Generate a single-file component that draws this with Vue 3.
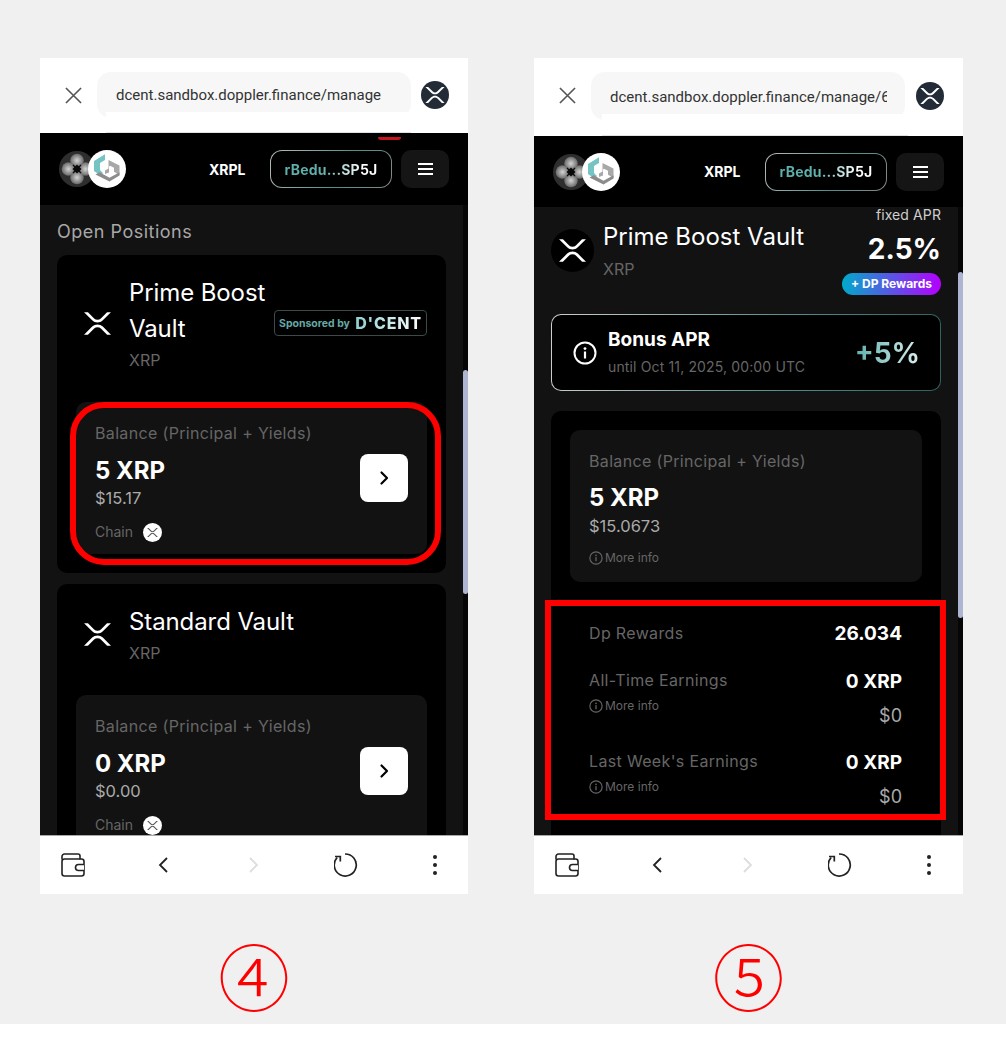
<script setup>
const phones = [
  { id: 4, glyph: '④', url: 'dcent.sandbox.doppler.finance/manage', thumbTop: 165, thumbHeight: 224 },
  { id: 5, glyph: '⑤', url: 'dcent.sandbox.doppler.finance/manage/6', thumbTop: 65, thumbHeight: 346 },
]
const vaults = [
  { name: 'Prime Boost Vault', badge: true, amount: '5 XRP', usd: '$15.17' },
  { name: 'Standard Vault', badge: false, amount: '0 XRP', usd: '$0.00' },
]
const earnings = [
  { label: 'All-Time Earnings', amount: '0 XRP', usd: '$0' },
  { label: "Last Week's Earnings", amount: '0 XRP', usd: '$0' },
]
</script>

<template>
  <div class="page">
    <svg class="defs" aria-hidden="true">
      <symbol id="xrp" viewBox="0 0 512 424">
        <path fill="currentColor" d="M437 0h74L357 152.48c-55.77 55.19-146.19 55.19-202 0L.94 0H75l117 115.83a91.1 91.1 0 0 0 127.91 0Z" />
        <path fill="currentColor" d="M74.05 424H0l155-153.42c55.77-55.19 146.19-55.19 202 0L512 424h-74L320 307.23a91.1 91.1 0 0 0-127.91 0Z" />
      </symbol>
      <symbol id="info" viewBox="0 0 24 24">
        <circle cx="12" cy="12" r="10.5" fill="none" stroke="currentColor" stroke-width="2" />
        <rect x="10.9" y="10.5" width="2.2" height="7" fill="currentColor" />
        <circle cx="12" cy="7.6" r="1.4" fill="currentColor" />
      </symbol>
      <symbol id="chev" viewBox="0 0 16 16">
        <path d="M5.5 2.5 11 8l-5.5 5.5" fill="none" stroke="currentColor" stroke-width="2.2" stroke-linecap="round" stroke-linejoin="round" />
      </symbol>
    </svg>

    <div class="stage">
      <div v-for="phone in phones" :key="phone.id" class="column" :class="`column-${phone.id}`">
        <div class="phone">
          <div class="topbar">
            <svg class="close" viewBox="0 0 18 18"><path d="M1 1l16 16M17 1 1 17" stroke="#555" stroke-width="1.7" fill="none" /></svg>
            <div class="url"><span class="url-text">{{ phone.url }}</span></div>
            <span class="wallet-dot"><svg class="wallet-dot-mark"><use href="#xrp" /></svg></span>
          </div>

          <header class="header">
            <div class="logos">
              <svg class="logo-doppler" viewBox="0 0 36 36">
                <defs>
                  <radialGradient :id="`petal-${phone.id}`" cx="50%" cy="50%" r="55%">
                    <stop offset="0" stop-color="#d4d4d4" />
                    <stop offset="1" stop-color="#5e5e5e" />
                  </radialGradient>
                </defs>
                <circle cx="18" cy="18" r="18" fill="#2e2e2e" />
                <circle cx="18" cy="9.500" r="6.800" :fill="`url(#petal-${phone.id})`" />
                <circle cx="18" cy="26.500" r="6.800" :fill="`url(#petal-${phone.id})`" />
                <circle cx="9.500" cy="18" r="6.800" :fill="`url(#petal-${phone.id})`" />
                <circle cx="26.500" cy="18" r="6.800" :fill="`url(#petal-${phone.id})`" />
                <path d="M18 13.500 22.500 18 18 22.500 13.500 18Z" fill="#0a0a0a" />
                <path d="M14 14l8 8M22 14l-8 8" stroke="#0a0a0a" stroke-width="1.200" />
              </svg>
              <svg class="logo-gem" viewBox="0 0 38 38">
                <circle cx="19" cy="19" r="19" fill="#fff" />
                <path d="M6 11 17 4.300V10l-5 3v7l3 3-2 3-7-5z" fill="#74c3c5" />
                <path d="M17 20.500l3.500-2V10l11 5.500V25l-5.500-3.200v-4l-4-2-1 .6v6L17 24z" fill="#a8a8a8" />
                <path d="M7.500 24.500l4-2.200 10 5.500 10-5.500v3.200L21.500 31.500z" fill="#8c8c8c" />
              </svg>
            </div>
            <span class="network">XRPL</span>
            <button class="wallet-btn"><span class="wallet-grad">rBedu...SP5J</span></button>
            <button class="menu-btn" aria-label="Menu"><span /><span /><span /></button>
          </header>

          <div class="body">
            <main class="scroll">
              <template v-if="phone.id === 4">
                <h2 class="section">Open Positions</h2>
                <section v-for="v in vaults" :key="v.name" class="card vault">
                  <div class="vault-head">
                    <svg class="vault-mark"><use href="#xrp" /></svg>
                    <div class="vault-names">
                      <div class="title" :class="{ narrow: v.badge }">{{ v.name }}</div>
                      <div class="sub">XRP</div>
                    </div>
                    <div v-if="v.badge" class="badge">
                      <span class="badge-by">Sponsored by</span>
                      <span class="badge-logo">D'CENT</span>
                    </div>
                  </div>
                  <div class="panel panel-row">
                    <div>
                      <div class="muted">Balance (Principal + Yields)</div>
                      <div class="amount">{{ v.amount }}</div>
                      <div class="usd">{{ v.usd }}</div>
                      <div class="chain">
                        <span>Chain</span>
                        <span class="chain-dot"><svg class="chain-mark"><use href="#xrp" /></svg></span>
                      </div>
                    </div>
                    <button class="go" aria-label="Open"><svg class="go-icon"><use href="#chev" /></svg></button>
                  </div>
                </section>
              </template>

              <template v-else>
                <div class="detail-head">
                  <span class="detail-dot"><svg class="detail-mark"><use href="#xrp" /></svg></span>
                  <div class="detail-names">
                    <div class="title">Prime Boost Vault</div>
                    <div class="sub">XRP</div>
                  </div>
                  <div class="apr">
                    <div class="apr-label">fixed APR</div>
                    <div class="apr-value">2.5%</div>
                    <div class="apr-pill">+ DP Rewards</div>
                  </div>
                </div>

                <div class="bonus">
                  <svg class="bonus-icon"><use href="#info" /></svg>
                  <div>
                    <div class="bonus-title">Bonus APR</div>
                    <div class="bonus-sub">until Oct 11, 2025, 00:00 UTC</div>
                  </div>
                  <div class="bonus-value">+5%</div>
                </div>

                <section class="card detail-card">
                  <div class="panel detail-panel">
                    <div class="muted">Balance (Principal + Yields)</div>
                    <div class="amount">5 XRP</div>
                    <div class="usd">$15.0673</div>
                    <div class="more"><svg class="more-icon"><use href="#info" /></svg>More info</div>
                  </div>
                  <div class="rows">
                    <div class="row-dp">
                      <span class="muted">Dp Rewards</span>
                      <span class="value">26.034</span>
                    </div>
                    <div v-for="e in earnings" :key="e.label" class="row">
                      <div>
                        <div class="muted">{{ e.label }}</div>
                        <div class="more tight"><svg class="more-icon"><use href="#info" /></svg>More info</div>
                      </div>
                      <div class="row-right">
                        <div class="value">{{ e.amount }}</div>
                        <div class="row-usd">{{ e.usd }}</div>
                      </div>
                    </div>
                  </div>
                </section>
              </template>
            </main>
            <div class="track">
              <div class="thumb" :style="{ marginTop: phone.thumbTop + 'px', height: phone.thumbHeight + 'px' }" />
            </div>
          </div>

          <nav class="bottom">
            <svg class="nav-wallet" viewBox="0 0 24 24">
              <path d="M1 6.500V3.500A2.500 2.500 0 0 1 3.500 1H17a2 2 0 0 1 2 2v3.500" fill="none" stroke="#222" stroke-width="1.6" />
              <rect x="1" y="6" width="22" height="17" rx="2.500" fill="none" stroke="#222" stroke-width="1.600" />
              <path d="M23 11.500h-5.500a3 3 0 0 0 0 6H23" fill="#fff" stroke="#222" stroke-width="1.600" />
            </svg>
            <svg class="nav-chev" viewBox="0 0 10 16"><path d="M9 1 2 8l7 7" fill="none" stroke="#222" stroke-width="1.800" /></svg>
            <svg class="nav-chev" viewBox="0 0 10 16"><path d="M1 1l7 7-7 7" fill="none" stroke="#ddd" stroke-width="1.800" /></svg>
            <svg class="nav-reload" viewBox="0 0 24 24">
              <path d="M11 1A11 11 0 1 1 3.200 4.500" fill="none" stroke="#222" stroke-width="1.700" />
              <path d="M1 3.500H6.300V8.500" fill="none" stroke="#222" stroke-width="1.700" />
            </svg>
            <div class="nav-dots"><i /><i /><i /></div>
          </nav>

          <div class="patch" />
          <template v-if="phone.id === 4">
            <div class="sliver" />
            <div class="ring" />
          </template>
          <div v-else class="frame" />
        </div>
        <div class="step">{{ phone.glyph }}</div>
      </div>
    </div>
  </div>
</template>

<style>
html, body { margin: 0; background: #fff; }
</style>

<style scoped>
.page {
  height: 1061px;
  background: #fff;
  font-family: Inter, "Noto Sans", sans-serif;
  overflow: hidden;
}
.defs { display: none; }
.stage {
  height: 1024px;
  box-sizing: border-box;
  padding: 58px 0 0 40px;
  background: #f0f0f0;
  display: flex;
  gap: 66px;
}
.column { display: flex; flex-direction: column; align-items: stretch; }
.column-4 { width: 428px; }
.column-5 { width: 429px; }
.phone {
  position: relative;
  height: 836px;
  display: flex;
  flex-direction: column;
  overflow: hidden;
  background: #000;
}
.step {
  margin-top: 40px;
  text-align: center;
  color: #f00;
  font: 300 72px/80px "Noto Sans CJK KR", sans-serif;
}

/* browser top bar */
.topbar {
  height: 75px;
  flex: none;
  background: #fff;
  display: flex;
  align-items: flex-start;
  padding: 14px 19px 0 25px;
  box-sizing: border-box;
}
.column-5 .topbar { height: 78px; }
.close { width: 17px; height: 17px; margin: 15px 15px 0 0; flex: none; }
.url {
  flex: none;
  width: 314px;
  height: 46px;
  box-sizing: border-box;
  padding: 0 18px 0 19px;
  background: #f7f7f7;
  border-radius: 14px;
  color: #333;
  font-family: Roboto, sans-serif;
  font-size: 15px;
  line-height: 47px;
  overflow: hidden;
}
.column-5 .url { height: 48px; line-height: 50px; }
.url-text { display: block; white-space: nowrap; overflow: hidden; }
.wallet-dot {
  flex: none;
  width: 28px;
  height: 28px;
  margin: 9px 0 0 10px;
  border-radius: 50%;
  background: #222b36;
  color: #fff;
  display: flex;
  align-items: center;
  justify-content: center;
}
.column-5 .wallet-dot { margin: 10px 0 0 11px; }
.wallet-dot-mark { width: 20px; height: 16px; }
.patch {
  position: absolute;
  left: 66px;
  top: 54px;
  width: 305px;
  height: 20px;
  background: #fff;
  border-bottom: 1px solid #e2e2e2;
}
.column-5 .patch { left: 68px; top: 56px; width: 306px; height: 21px; }
.sliver {
  position: absolute;
  left: 338px;
  top: 79px;
  width: 23px;
  height: 3px;
  background: #c8141c;
  border-radius: 0 0 10px 10px;
}

/* app header */
.header {
  height: 72px;
  flex: none;
  background: #000;
  box-sizing: border-box;
  padding: 0 19px;
  display: flex;
  align-items: center;
}
.column-5 .header { height: 71px; }
.logos { display: flex; align-items: center; width: 150px; flex: none; }
.column-5 .logos { width: 151px; }
.logo-doppler { width: 36px; height: 36px; flex: none; }
.logo-gem { width: 38px; height: 38px; flex: none; margin-left: -7px; }
.network { color: #fff; font-size: 14px; font-weight: 700; width: 61px; flex: none; }
.wallet-btn {
  width: 122px;
  height: 38px;
  flex: none;
  padding: 0;
  border: 1px solid transparent;
  border-radius: 12px;
  background: linear-gradient(#000, #000) padding-box, linear-gradient(120deg, #bbb, #4f8f8c 60%, #888) border-box;
  font: 700 14px Inter, sans-serif;
  letter-spacing: 0.200px;
}
.wallet-grad {
  background: linear-gradient(90deg, #5fb0ac 40%, #fff 85%);
  -webkit-background-clip: text;
  background-clip: text;
  color: transparent;
}
.menu-btn {
  width: 48px;
  height: 38px;
  flex: none;
  margin-left: 9px;
  padding: 0;
  border: 0;
  border-radius: 10px;
  background: #151515;
  display: flex;
  flex-direction: column;
  align-items: center;
  justify-content: center;
  gap: 3px;
}
.menu-btn span { display: block; width: 15px; height: 2px; background: #fff; }

/* scrolling body */
.body { flex: 1; min-height: 0; display: flex; }
.scroll {
  flex: 1;
  min-width: 0;
  background: #121212;
  box-sizing: border-box;
  padding: 0 17px;
  overflow: hidden;
}
.track { width: 5px; flex: none; background: #060606; }
.thumb { background: #aeb5d0; border-radius: 3px; }
.section {
  margin: 14px 0 12px;
  padding-top: 1px;
  height: 23px;
  color: #a8a8a8;
  font-size: 18px;
  line-height: 24px;
  font-weight: 400;
  letter-spacing: 0.500px;
}
.card { background: #000; border-radius: 10px; }
.vault { padding: 19px; margin-bottom: 11px; }
.vault-head { display: flex; align-items: center; margin-bottom: 30px; }
.vault-mark { width: 27px; height: 25px; margin: 0 18px 0 8px; flex: none; color: #fff; }
.vault-names { flex: none; }
.title { color: #fff; font-size: 24px; line-height: 36px; }
.vault-names .title { padding-top: 1px; letter-spacing: -0.100px; }
.vault-names .title.narrow { padding-top: 0; margin-top: 1px; }
.title.narrow { width: 145px; }
.sub { color: #666; font-size: 16px; line-height: 24px; margin-top: 2px; }
.vault-names .sub { margin-top: 1px; }
.badge {
  margin-left: auto;
  width: 153px;
  height: 26px;
  box-sizing: border-box;
  border: 1px solid #3c4a4a;
  border-radius: 4px;
  padding: 0 4px;
  display: flex;
  align-items: center;
  justify-content: space-between;
  white-space: nowrap;
}
.badge-by { color: #65aaa6; font-size: 10.500px; font-weight: 700; }
.badge-logo {
  font-size: 16px;
  font-weight: 800;
  letter-spacing: 0.800px;
  background: linear-gradient(90deg, #8fd0d0, #fff);
  -webkit-background-clip: text;
  background-clip: text;
  color: transparent;
}
.panel { background: #121212; border-radius: 10px; box-sizing: border-box; padding: 19px; }
.panel-row { height: 152px; display: flex; align-items: center; justify-content: space-between; padding-top: 19px; padding-bottom: 12px; }
.muted { color: #666; font-size: 16px; line-height: 24px; letter-spacing: 0.340px; }
.amount { color: #fff; font-size: 24px; line-height: 32px; font-weight: 700; margin: 10px 0 -1px; }
.usd { color: #aaa; font-size: 16.500px; line-height: 24px; }
.chain { display: flex; align-items: center; gap: 10px; color: #666; font-size: 14px; line-height: 20px; margin-top: 12px; }
.chain-dot {
  width: 19px;
  height: 19px;
  border-radius: 50%;
  background: #fff;
  color: #555;
  display: flex;
  align-items: center;
  justify-content: center;
}
.chain-mark { width: 11px; height: 9px; }
.go {
  width: 48px;
  height: 48px;
  flex: none;
  margin-top: -7px;
  padding: 0;
  border: 0;
  border-radius: 8px;
  background: #fff;
  color: #000;
  display: flex;
  align-items: center;
  justify-content: center;
}
.go-icon { width: 16px; height: 16px; }

/* detail view */
.detail-head { display: flex; align-items: center; margin-top: -2px; height: 90px; }
.detail-dot {
  width: 43px;
  height: 43px;
  flex: none;
  border-radius: 50%;
  background: #000;
  color: #fff;
  display: flex;
  align-items: center;
  justify-content: center;
}
.detail-mark { width: 27px; height: 23px; }
.detail-names { margin-left: 9px; }
.apr { margin-left: auto; display: flex; flex-direction: column; align-items: flex-end; }
.apr-label { color: #cfcfcf; font-size: 14px; line-height: 20px; letter-spacing: 0.100px; }
.apr-value { color: #fff; font-size: 28px; line-height: 36px; font-weight: 700; margin-top: 6px; }
.apr-pill {
  margin-top: 6px;
  height: 22px;
  width: 99px;
  border-radius: 11px;
  background: linear-gradient(90deg, #00aacb, #b400ff);
  color: #fff;
  font-size: 12px;
  font-weight: 700;
  line-height: 22px;
  text-align: center;
}
.bonus {
  margin-top: 19px;
  height: 77px;
  box-sizing: border-box;
  padding: 0 20px 0 21px;
  border: 1px solid transparent;
  border-radius: 10px;
  background: linear-gradient(#000, #000) padding-box, linear-gradient(100deg, #cfcfcf, #4f8f8c 60%, #2f5f5f) border-box;
  display: flex;
  align-items: center;
}
.bonus-icon { width: 24px; height: 24px; color: #fff; margin-right: 11px; flex: none; }
.bonus-title { color: #fff; font-size: 19px; line-height: 24px; font-weight: 700; }
.bonus-sub { color: #666; font-size: 14px; line-height: 20px; margin-top: 5px; letter-spacing: 0.140px; }
.bonus-value {
  margin-left: auto;
  font-size: 28px;
  font-weight: 700;
  background: linear-gradient(90deg, #5fb0ac, #d8eeee);
  -webkit-background-clip: text;
  background-clip: text;
  color: transparent;
}
.detail-card { margin-top: 20px; padding: 19px; height: 500px; }
.detail-panel { height: 152px; }
.detail-panel .amount { margin: 9px 0 0; }
.more { display: flex; align-items: center; gap: 2px; color: #666; font-size: 12px; line-height: 20px; margin-top: 10px; }
.more.tight { margin-top: 5px; line-height: 18px; }
.more-icon { width: 14px; height: 14px; }
.rows { padding: 38px 20px 0 19px; }
.row-dp { display: flex; justify-content: space-between; align-items: center; height: 28px; margin-bottom: 20px; }
.row-dp .muted { margin-top: -2px; }
.value { color: #fff; font-size: 19px; line-height: 28px; font-weight: 700; }
.row { display: flex; justify-content: space-between; height: 59px; margin-bottom: 22px; }
.row-right { text-align: right; }
.row-usd { color: #aaa; font-size: 18px; line-height: 24px; margin-top: 8px; }

/* bottom browser bar */
.bottom {
  height: 59px;
  flex: none;
  box-sizing: border-box;
  background: #fff;
  border-top: 1px solid #a8a8a8;
  display: flex;
  align-items: center;
  padding: 0 0 0 21px;
}
.nav-wallet { width: 24px; height: 24px; flex: none; }
.nav-chev { width: 10px; height: 16px; flex: none; margin-left: 73px; }
.nav-chev + .nav-chev { margin-left: 81px; }
.nav-reload { width: 24px; height: 24px; flex: none; margin-left: 75px; }
.nav-dots { margin-left: 75px; display: flex; flex-direction: column; gap: 4px; }
.nav-dots i { display: block; width: 4px; height: 4px; border-radius: 50%; background: #222; }

/* annotation overlays */
.ring {
  position: absolute;
  left: 30px;
  top: 344px;
  width: 371px;
  height: 163px;
  box-sizing: border-box;
  border: 6px solid #f00;
  border-radius: 34px;
}
.frame {
  position: absolute;
  left: 11px;
  top: 542px;
  width: 401px;
  height: 220px;
  box-sizing: border-box;
  border: 6px solid #f00;
}
</style>
